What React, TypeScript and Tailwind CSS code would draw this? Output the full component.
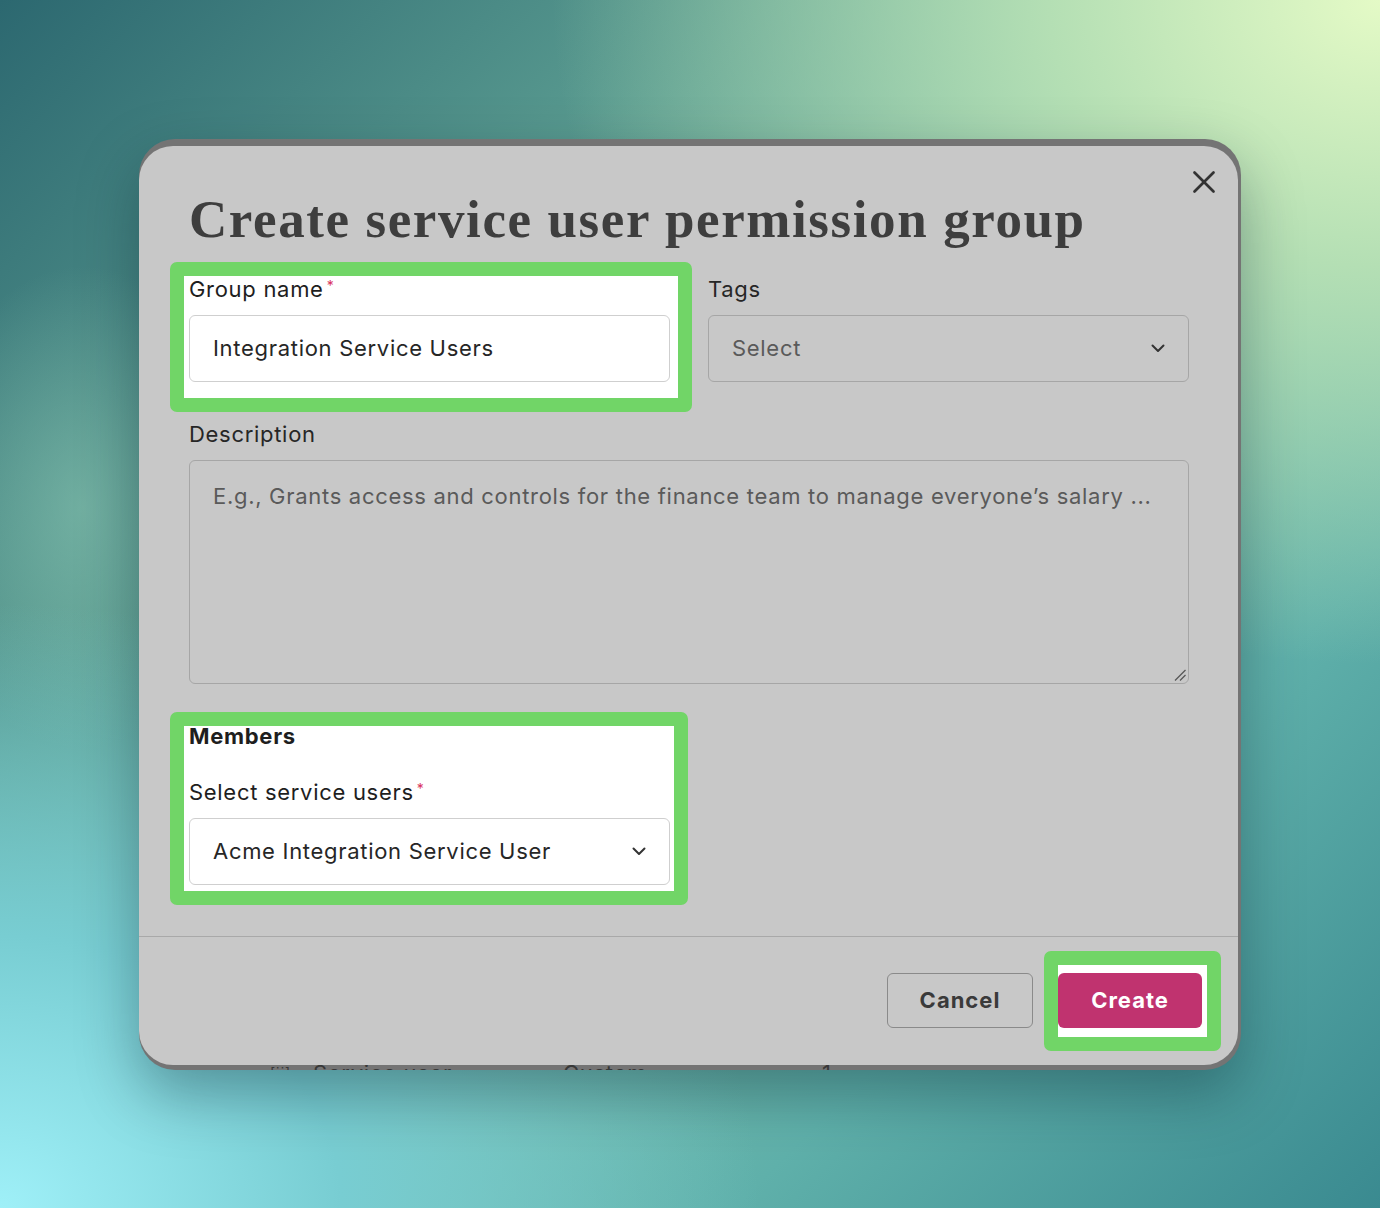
import type { ReactNode } from 'react'

function Chevron() {
  return (
    <svg width="14" height="9" viewBox="0 0 14 9" fill="none" stroke="currentColor" strokeWidth="2" strokeLinecap="round" strokeLinejoin="round">
      <polyline points="1.5 1.5 7 7 12.5 1.5" />
    </svg>
  )
}

function Required() {
  return <span className="relative -top-[6px] ml-[3px] text-[14px] leading-none text-[#d9345c]">*</span>
}

// green annotation frame, pulled out with negative margins so the content keeps its place
function Highlight({ className, children }: { className: string; children: ReactNode }) {
  return <div className={`rounded-[7px] border-[14px] border-[#71d567] bg-white ${className}`}>{children}</div>
}

export default function App() {
  return (
    <div className="flex h-[1208px] w-full items-center justify-center bg-[radial-gradient(ellipse_60%_55%_at_100%_0%,#e4fac6_0%,#b4dfb4_40%,transparent_100%),radial-gradient(ellipse_55%_50%_at_0%_100%,#9ff0f8_0%,#78cdd2_45%,transparent_100%),radial-gradient(ellipse_12%_20%_at_6%_42%,rgba(140,200,180,0.55)_0%,transparent_100%),linear-gradient(135deg,#2c6870_0%,#5c9e92_30%,#7cc0ac_55%,#5fb0aa_75%,#3a8a90_100%)] font-['Inter',sans-serif] tracking-[0.7px]">
      <div className="flex h-[931px] w-[1102px] flex-col overflow-hidden rounded-[36px] bg-[#747474] pr-[3px] pt-[7px] shadow-[0_24px_60px_rgba(0,30,40,0.35)]">
        <div className="relative z-10 flex h-[919px] shrink-0 flex-col rounded-[34px] bg-[#c8c8c8]">
          <button className="absolute right-[23px] top-[25px] text-[#333]" aria-label="Close">
            <svg width="22" height="22" viewBox="0 0 22 22" fill="none" stroke="currentColor" strokeWidth="2.6" strokeLinecap="round">
              <line x1="1.5" y1="1.5" x2="20.5" y2="20.5" />
              <line x1="20.5" y1="1.5" x2="1.5" y2="20.5" />
            </svg>
          </button>

          <div className="flex-1 px-[50px] pr-[49px] pt-[45px]">
            <h1 className="font-['Liberation_Serif',serif] text-[53px] font-bold leading-[56px] tracking-[1.6px] text-[#3e3e3e]">
              Create service user permission group
            </h1>

            <div className="mt-[29px] grid grid-cols-2 gap-x-[38px]">
              <Highlight className="-mb-[30px] -ml-[19px] -mr-[22px] -mt-[14px] pb-[16px] pl-[5px] pr-[8px]">
                <label className="block text-[22px] leading-[26px] text-[#1e1e1e]">
                  Group name<Required />
                </label>
                <div className="mt-[13px] flex h-[67px] items-center rounded-[6px] border-[1.5px] border-[#cfcfcf] bg-white px-[23px] text-[22px] text-[#262626]">
                  Integration Service Users
                </div>
              </Highlight>
              <div>
                <label className="block text-[22px] leading-[26px] text-[#262626]">Tags</label>
                <div className="mt-[13px] flex h-[67px] items-center justify-between rounded-[6px] border-[1.5px] border-[#a6a6a6] px-[23px] text-[22px] text-[#5a5a5a]">
                  Select
                  <span className="text-[#333]">
                    <Chevron />
                  </span>
                </div>
              </div>
            </div>

            <label className="mt-[39px] block text-[22px] leading-[26px] text-[#262626]">Description</label>
            <div className="relative mt-[13px] h-[224px] rounded-[6px] border-[1.5px] border-[#a6a6a6] px-[23px] pt-[22px] text-[22px] leading-[26px] text-[#5a5a5a]">
              E.g., Grants access and controls for the finance team to manage everyone’s salary ...
              <svg className="absolute bottom-[2px] right-[2px]" width="12" height="12" viewBox="0 0 12 12" fill="none" stroke="#555" strokeWidth="1.3">
                <line x1="1" y1="11.5" x2="11.5" y2="1" />
                <line x1="6" y1="11.5" x2="11.5" y2="6" />
              </svg>
            </div>

            <div className="mt-[42px] grid grid-cols-2 gap-x-[38px]">
              <Highlight className="-mb-[20px] -ml-[19px] -mr-[18px] -mt-[14px] pb-[6px] pl-[5px] pr-[4px]">
                <div className="text-[22px] font-bold leading-[20px] text-[#1e1e1e]">Members</div>
                <label className="mt-[33px] block text-[22px] leading-[26px] text-[#1e1e1e]">
                  Select service users<Required />
                </label>
                <div className="mt-[13px] flex h-[67px] items-center justify-between rounded-[6px] border-[1.5px] border-[#cfcfcf] bg-white px-[23px] text-[22px] text-[#262626]">
                  Acme Integration Service User
                  <span className="text-[#333]">
                    <Chevron />
                  </span>
                </div>
              </Highlight>
            </div>
          </div>

          <div className="flex h-[129px] shrink-0 items-center justify-end gap-[25px] border-t border-[#a9a9a9] pr-[36px]">
            <button className="h-[55px] w-[146px] rounded-[6px] border-[1.5px] border-[#8a8a8a] text-[22px] font-bold tracking-[1px] text-[#3a3a3a]">
              Cancel
            </button>
            <Highlight className="-mb-[23px] -ml-[14px] -mr-[19px] -mt-[22px] pb-[9px] pr-[5px] pt-[8px]">
              <button className="h-[55px] w-[144px] rounded-[6px] bg-[#c0336f] text-[22px] font-bold tracking-[1px] text-white">Create</button>
            </Highlight>
          </div>
        </div>

        {/* list rows of the page underneath, mostly hidden by the dialog */}
        <div className="-mt-[5px] flex items-center text-[22px] leading-[26px] text-[#383838]">
          <span className="ml-[131px] w-[27px] text-[14px]">[⁞⁞]</span>
          <span className="ml-[16px] w-[250px]">Service user</span>
          <span className="w-[259px]">Custom</span>
          <span>1</span>
        </div>
      </div>
    </div>
  )
}
